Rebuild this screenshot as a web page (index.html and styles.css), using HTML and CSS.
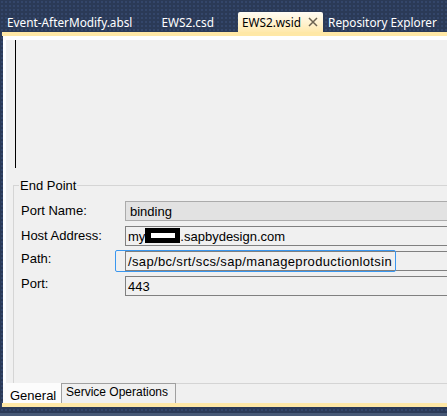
FILE: index.html
```html
<!DOCTYPE html>
<html>
<head>
<meta charset="utf-8">
<link rel="stylesheet" href="styles.css">
</head>
<body>
<div class="window">
  <div class="tabbar">
    <div class="tab">Event-AfterModify.absl<span class="close hidden">×</span></div>
    <div class="tab">EWS2.csd<span class="close hidden">×</span></div>
    <div class="tab active">EWS2.wsid<span class="close">
      <svg width="10" height="10" viewBox="0 0 10 10"><path d="M1 1L9 9M9 1L1 9" stroke="#6b6251" stroke-width="1.5"/></svg>
    </span></div>
    <div class="tab">Repository Explorer</div>
  </div>
  <div class="accent"></div>
  <div class="doc">
    <div class="content">
      <div class="editor"></div>
      <fieldset class="group">
        <legend>End Point</legend>
        <div class="form">
          <div class="label">Port Name:</div>
          <div class="field readonly">binding</div>
          <div class="label">Host Address:</div>
          <div class="field">my<span class="redact"><span class="redact-bar"></span></span>.sapbydesign.com</div>
          <div class="label up">Path:</div>
          <div class="field path">/sap/bc/srt/scs/sap/manageproductionlotsin<span class="focus"></span></div>
          <div class="label up">Port:</div>
          <div class="field">443</div>
        </div>
      </fieldset>
    </div>
    <div class="bottomtabs">
      <div class="btab active">General</div>
      <div class="btab">Service Operations</div>
      <div class="btab-rest"></div>
    </div>
  </div>
  <div class="accent"></div>
  <div class="footer"></div>
</div>
</body>
</html>
```

FILE: styles.css
```css
html, body {
  margin: 0;
  padding: 0;
}
body {
  width: 447px;
  height: 416px;
  overflow: hidden;
  background: #2b3a57;
}
.window {
  display: flex;
  flex-direction: column;
  width: 447px;
  height: 416px;
  overflow: hidden;
  background-color: #2b3a57;
  background-image: radial-gradient(#34466a 0.8px, transparent 0.9px);
  background-size: 4px 4px;
}
.tabbar {
  height: 32px;
  display: flex;
  align-items: flex-end;
  padding-left: 2px;
  font-family: "Noto Sans", "Open Sans", sans-serif;
  font-size: 11.8px;
  color: #ffffff;
  flex: none;
}
.tab {
  height: 20px;
  display: flex;
  align-items: center;
  padding: 0 5px;
  white-space: nowrap;
  border-radius: 2px 2px 0 0;
}
.tab.active {
  background: linear-gradient(#fffcf4, #fff1cc 60%, #ffe9ac);
  color: #000000;
  padding-left: 4px;
  padding-right: 3px;
}
.close {
  width: 14px;
  margin-left: 5px;
  display: flex;
  align-items: center;
  justify-content: center;
}
.close.hidden {
  visibility: hidden;
}
.accent {
  height: 4px;
  margin-left: 2px;
  background: #ffe8a6;
  flex: none;
}
.doc {
  margin-left: 3px;
  background: #ffffff;
  padding-top: 4px;
  display: flex;
  flex-direction: column;
  flex: none;
}
.content {
  margin-left: 3px;
  height: 343px;
  background: #f0f0f0;
  overflow: hidden;
  display: flex;
  flex-direction: column;
}
.editor {
  margin-left: 9px;
  height: 128px;
  border-left: 1px solid #000000;
  flex: none;
}
.group {
  margin: 10px 0 0 7px;
  padding: 8px 0 0 7px;
  width: 600px;
  height: 200px;
  border: none;
  border-top: 1px solid #d5d5d5;
  border-left: 1px solid #d5d5d5;
  font-family: "Liberation Sans", Arial, sans-serif;
  font-size: 13px;
  color: #000000;
}
.group legend {
  padding: 0 1px;
  margin-left: -2px;
  font-size: 13px;
}
.form {
  display: grid;
  grid-template-columns: 104px 420px;
  grid-auto-rows: 20px;
  row-gap: 5px;
  align-items: center;
}
.label {
  padding-bottom: 1px;
}
.label.up {
  padding-bottom: 5px;
}
.field {
  height: 20px;
  box-sizing: border-box;
  border: 1px solid #808080;
  padding-left: 2px;
  display: flex;
  align-items: center;
  white-space: nowrap;
  background: #f0f0f0;
  position: relative;
}
.field.readonly {
  background: #e2e2e2;
  border-color: #ababab;
  padding-left: 4px;
}
.field.path {
  letter-spacing: 0.35px;
}
.redact {
  width: 35px;
  height: 15px;
  margin-top: -2px;
  background: #000000;
  display: flex;
  align-items: center;
  justify-content: center;
}
.redact-bar {
  width: 24px;
  height: 5px;
  background: #ffffff;
}
.focus {
  position: absolute;
  left: -11px;
  top: -2px;
  width: 281px;
  height: 22px;
  box-sizing: border-box;
  border: 1.5px solid #3a97ef;
  border-radius: 2px;
}
.bottomtabs {
  display: flex;
  height: 20px;
  font-family: "Liberation Sans", Arial, sans-serif;
  font-size: 12px;
  flex: none;
}
.btab {
  box-sizing: border-box;
  white-space: nowrap;
}
.btab.active {
  width: 58px;
  background: #fcfcfc;
  padding: 5px 0 0 7px;
  font-size: 13px;
}
.btab:not(.active) {
  width: 115px;
  background: #f0f0f0;
  border: 1px solid #a0a0a0;
  border-bottom: none;
  padding: 1px 0 0 4px;
}
.btab-rest {
  flex: 1;
  background: #f0f0f0;
  border-top: 1px solid #d4d4d4;
}
.footer {
  flex: 1;
  border-bottom: 3px solid #465876;
}
```
